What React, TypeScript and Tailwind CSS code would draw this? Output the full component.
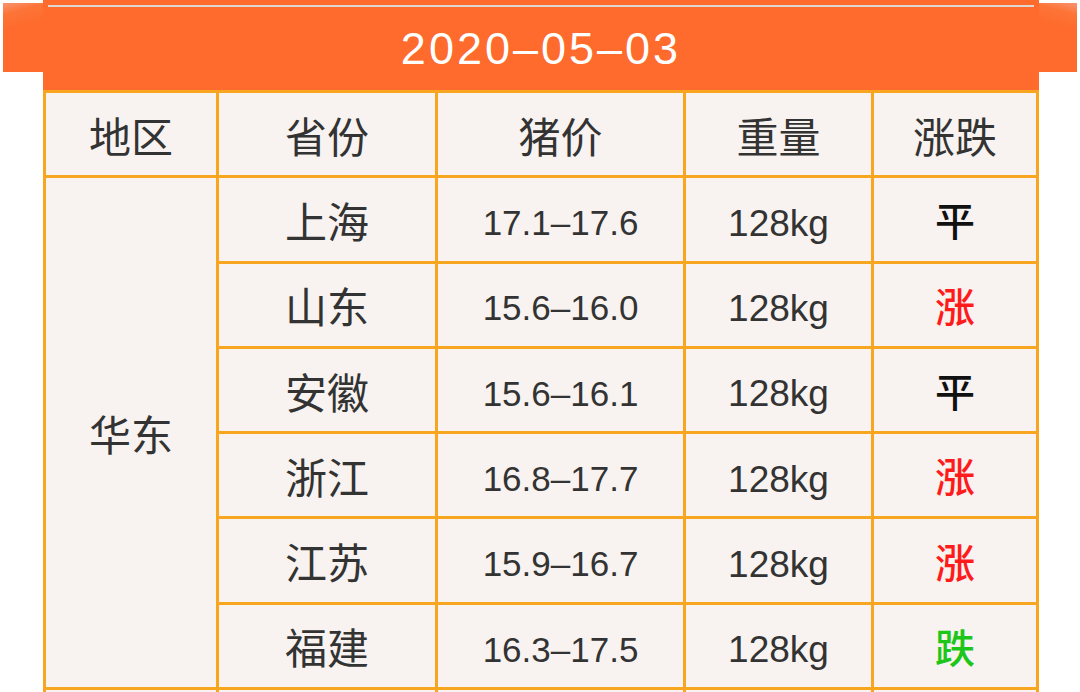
const rows = [
  { province: '上海', price: '17.1–17.6', weight: '128kg', trend: '平' },
  { province: '山东', price: '15.6–16.0', weight: '128kg', trend: '涨' },
  { province: '安徽', price: '15.6–16.1', weight: '128kg', trend: '平' },
  { province: '浙江', price: '16.8–17.7', weight: '128kg', trend: '涨' },
  { province: '江苏', price: '15.9–16.7', weight: '128kg', trend: '涨' },
  { province: '福建', price: '16.3–17.5', weight: '128kg', trend: '跌' },
];

const trendColor: Record<string, string> = {
  平: 'text-[#111111]',
  涨: 'text-[#ff1b1b]',
  跌: 'text-[#1fc61a]',
};

const cjk = 'font-["Noto_Sans_CJK_SC",sans-serif]';
const num = 'font-["Liberation_Sans","Noto_Sans_CJK_SC",sans-serif]';

function Cell({
  children,
  className = '',
  color = 'text-[#333333]',
}: {
  children?: React.ReactNode;
  className?: string;
  color?: string;
}) {
  return (
    <div className={`bg-[#f8f3f0] flex items-center justify-center ${color} ${className}`}>
      {children}
    </div>
  );
}

export default function App() {
  return (
    <div className="w-[1080px] h-[692px] overflow-hidden bg-white">
      <div className="flex h-[72px]">
        <div className="ml-[3px] mt-[3px] w-[40px] bg-[linear-gradient(165deg,#f99470_0%,#fd7438_15%,#fe6b2c_35%)]" />
        <div className="w-[996px] flex flex-col">
          <div className="h-[5px] bg-[#fe6b2c]" />
          <div className="h-[2px] bg-[#fe6b2c] px-[5px]">
            <div className="h-full bg-[#e3d6d0]" />
          </div>
          <div className="flex-1 bg-[#fe6b2c] flex items-center justify-center">
            <span className={`${num} text-white text-[45px] tracking-[3px] leading-none mt-[18px]`}>
              2020–05–03
            </span>
          </div>
        </div>
        <div className="mt-[3px] w-[38px] bg-[linear-gradient(195deg,#f99470_0%,#fd7438_15%,#fe6b2c_35%)]" />
      </div>
      <div className="ml-[43px] w-[996px]">
        <div className="h-[18px] bg-[#fe6b2c]" />
        <div className="grid grid-cols-[170px_216px_245px_185px_162px] auto-rows-[82.3px] gap-[3px] p-[3px] bg-[#f8a61f]">
          {['地区', '省份', '猪价', '重量', '涨跌'].map((h) => (
            <Cell key={h} className={`${cjk} text-[42px]`}>
              {h}
            </Cell>
          ))}
          <Cell className={`${cjk} text-[42px] row-span-6`}>华东</Cell>
          {rows.map((r) => (
            <div key={r.province} className="contents">
              <Cell className={`${cjk} text-[42px]`}>{r.province}</Cell>
              <Cell className={`${num} text-[35px]`}>
                <span className="mt-[8px]">{r.price}</span>
              </Cell>
              <Cell className={`${num} text-[37px]`}>
                <span className="mt-[8px]">{r.weight}</span>
              </Cell>
              <Cell className={`${cjk} text-[40px] font-medium`} color={trendColor[r.trend]}>
                {r.trend}
              </Cell>
            </div>
          ))}
          <Cell />
          <Cell />
          <Cell />
          <Cell />
          <Cell />
        </div>
      </div>
    </div>
  );
}
